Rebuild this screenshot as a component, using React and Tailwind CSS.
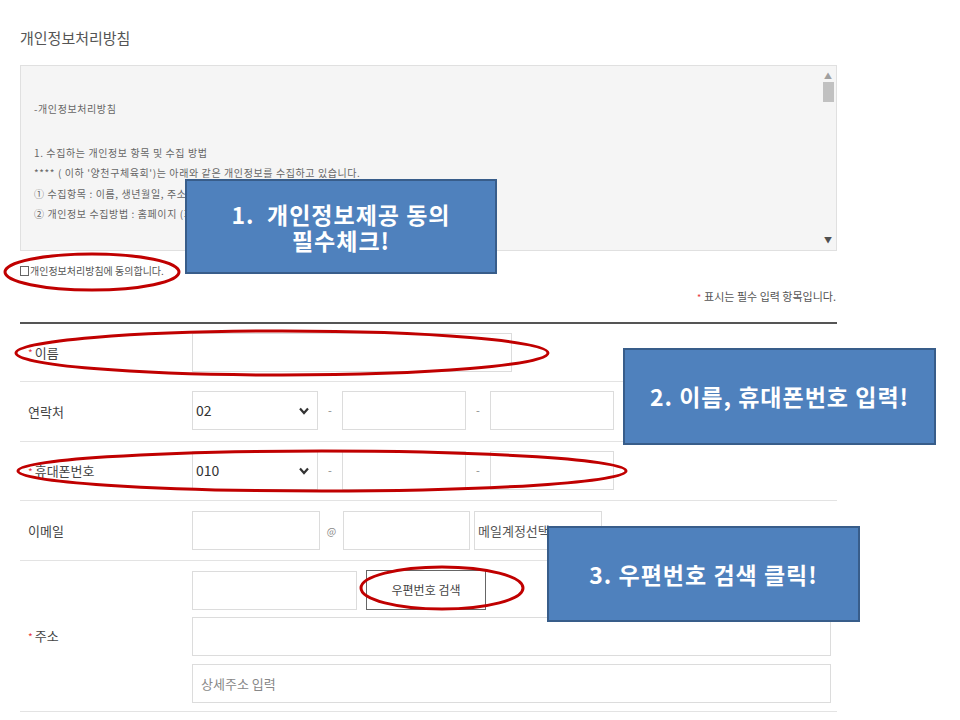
import React from 'react';

const font = { fontFamily: '"Noto Sans CJK KR", "Noto Sans", sans-serif' };

function Req() {
  return <span className="text-[#e8383d] text-[10px] mr-[2px]">*</span>;
}

function Field({ w, children, className = '' }) {
  return (
    <div className={`h-[39px] border border-[#dcdcdc] bg-white flex items-center text-[13px] text-[#555] ${w} ${className}`}>
      {children}
    </div>
  );
}

function SelectBox({ w, value }) {
  return (
    <Field w={w} className="pl-[3px] pr-[8px] justify-between">
      <span className="text-[14px] text-[#333]">{value}</span>
      <svg width="10" height="8" viewBox="0 0 10 8">
        <path d="M1 1.5 L5 6 L9 1.5" fill="none" stroke="#333" strokeWidth="2.2" />
      </svg>
    </Field>
  );
}

function Dash() {
  return <div className="w-[24px] text-center text-[11px] text-[#888]">-</div>;
}

function Row({ label, req, children, className = '' }) {
  return (
    <div className={`flex border-b border-[#e3e3e3] ${className}`}>
      <div className="w-[172px] pl-[8px] flex items-center text-[13px] text-[#444]">
        {req && <Req />}
        {label}
      </div>
      <div className="flex-1">{children}</div>
    </div>
  );
}

function Callout({ className, children }) {
  return (
    <div className={`absolute bg-[#4f81bd] border-2 border-[#385d8a] text-white font-bold tracking-[1px] flex items-center justify-center text-center ${className}`}>
      {children}
    </div>
  );
}

export default function App() {
  return (
    <div className="relative w-[960px] h-[720px] bg-white overflow-hidden" style={font}>
      <div className="pl-5 pt-[28px] w-[837px]">
        <h2 className="text-[15px] leading-[20px] text-[#555]">개인정보처리방침</h2>

        <div className="mt-[17px] h-[186px] border border-[#e0e0e0] bg-[#f5f5f5] flex">
          <div className="flex-1 pl-[13px] pt-[33px] text-[10px] tracking-[0.6px] text-[#666] leading-[20.5px]">
            <p>-개인정보처리방침</p>
            <p className="mt-[23px]">1. 수집하는 개인정보 항목 및 수집 방법</p>
            <p>**** ( 이하 '양천구체육회')는 아래와 같은 개인정보를 수집하고 있습니다.</p>
            <p>① 수집항목 : 이름, 생년월일, 주소, 연락처, 휴대폰번호, 이메일</p>
            <p>② 개인정보 수집방법 : 홈페이지 (회원가입, 게시판, 신청서)</p>
          </div>
          <div className="w-[16px] flex flex-col items-center pt-[5px] pb-[5px]">
            <span className="text-[8px] leading-[10px] text-[#a0a0a0]">▲</span>
            <div className="mt-[1px] w-[11px] h-[20px] bg-[#c1c1c1]" />
            <div className="flex-1" />
            <span className="text-[8px] leading-[10px] text-[#505050]">▼</span>
          </div>
        </div>

        <label className="mt-[13px] flex items-center text-[10px] text-[#555] leading-[14px]">
          <span className="w-[9px] h-[10px] border border-[#666] bg-white mr-[1px]" />
          개인정보처리방침에 동의합니다.
        </label>

        <div className="mt-[11px] text-right text-[11px] text-[#555] leading-[14px] pr-[1px]">
          <span className="text-[#e8383d] text-[9px] mr-[3px]">*</span>표시는 필수 입력 항목입니다.
        </div>

        <div className="mt-[17px] border-t-2 border-[#555]">
          <Row label="이름" req className="h-[58px]">
            <div className="pt-[9px]">
              <Field w="w-[320px]" />
            </div>
          </Row>
          <Row label="연락처" className="h-[60px]">
            <div className="pt-[9px] flex items-center">
              <SelectBox w="w-[126px]" value="02" />
              <Dash />
              <Field w="w-[124px]" />
              <Dash />
              <Field w="w-[124px]" />
            </div>
          </Row>
          <Row label="휴대폰번호" req className="h-[59px]">
            <div className="pt-[9px] flex items-center">
              <SelectBox w="w-[126px]" value="010" />
              <Dash />
              <Field w="w-[124px]" />
              <Dash />
              <Field w="w-[124px]" />
            </div>
          </Row>
          <Row label="이메일" className="h-[60px]">
            <div className="pt-[10px] flex items-center">
              <Field w="w-[128px]" />
              <div className="w-[23px] text-center text-[10px] text-[#888]">@</div>
              <Field w="w-[127px]" />
              <Field w="w-[128px]" className="ml-[4px] pl-[3px] text-[12px] text-[#444]">메일계정선택</Field>
            </div>
          </Row>
          <Row label="주소" req className="h-[151px]">
            <div className="pt-[9px] pr-[6px] flex flex-col gap-[8px]">
              <div className="flex items-center">
                <Field w="w-[165px]" />
                <button className="ml-[9px] h-[40px] w-[120px] border border-[#666] bg-white text-[12px] text-[#444]">
                  우편번호 검색
                </button>
              </div>
              <Field w="w-full" className="-mt-[1px]" />
              <Field w="w-full" className="pl-[8px] text-[12px] text-[#888]">상세주소 입력</Field>
            </div>
          </Row>
        </div>
      </div>

      <svg className="absolute inset-0 pointer-events-none" width="960" height="720">
        <g fill="none" stroke="#c00000" strokeWidth="3">
          <ellipse cx="92" cy="272" rx="87" ry="18" />
          <ellipse cx="282" cy="353" rx="266" ry="22" />
          <ellipse cx="322" cy="471" rx="304" ry="20" />
          <ellipse cx="442" cy="588" rx="81" ry="21" />
        </g>
      </svg>

      <Callout className="left-[185px] top-[179px] w-[312px] h-[95px] text-[23px] leading-[26px]">
        <div>
          1.&nbsp; 개인정보제공 동의
          <br />
          필수체크!
        </div>
      </Callout>
      <Callout className="left-[623px] top-[348px] w-[313px] h-[97px] text-[23px]">
        2. 이름, 휴대폰번호 입력!
      </Callout>
      <Callout className="left-[547px] top-[526px] w-[313px] h-[96px] text-[23px]">
        3. 우편번호 검색 클릭!
      </Callout>
    </div>
  );
}
